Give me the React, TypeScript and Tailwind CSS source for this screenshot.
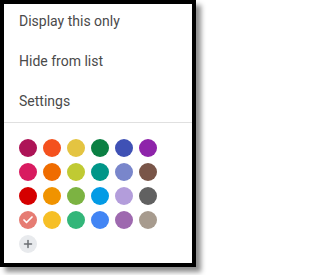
import { Check, Plus } from 'lucide-react';

const rows = [
  ['#AD1457', '#F4511E', '#E4C441', '#0B8043', '#3F51B5', '#8E24AA'],
  ['#D81B60', '#EF6C00', '#C0CA33', '#009688', '#7986CB', '#795548'],
  ['#D50000', '#F09300', '#7CB342', '#039BE5', '#B39DDB', '#616161'],
  ['#E67C73', '#F6BF26', '#33B679', '#4285F4', '#9E69AF', '#A79B8E'],
];

const items = ['Display this only', 'Hide from list', 'Settings'];

export default function App() {
  return (
    <div className="w-[205px] h-[275px] bg-white" style={{ fontFamily: 'Roboto, "Liberation Sans", sans-serif' }}>
      <div className="w-[196px] h-[267px] border-4 border-black bg-white shadow-[5px_5px_5px_rgba(0,0,0,0.45)] overflow-hidden">
        <ul className="-mt-[3px]">
          {items.map((label) => (
            <li key={label} className="h-10 flex items-center pl-[15px] text-[14px] text-[#4a4a4a]">
              {label}
            </li>
          ))}
        </ul>
        <div className="h-px bg-[#e0e0e0] mt-[1px]" />
        <div className="pl-[15px] pt-[16px] flex flex-col gap-[6px]">
          {rows.map((row, i) => (
            <div key={i} className="flex gap-[6px]">
              {row.map((c, j) => (
                <div key={c} className="w-[18px] h-[18px] rounded-full flex items-center justify-center" style={{ backgroundColor: c }}>
                  {i === 3 && j === 0 && <Check className="w-3 h-3 text-white" strokeWidth={3.5} />}
                </div>
              ))}
            </div>
          ))}
          <div className="w-[18px] h-[18px] rounded-full bg-[#e8eaed] flex items-center justify-center">
            <Plus className="w-3 h-3 text-[#6b6f73]" strokeWidth={3} />
          </div>
        </div>
      </div>
    </div>
  );
}
